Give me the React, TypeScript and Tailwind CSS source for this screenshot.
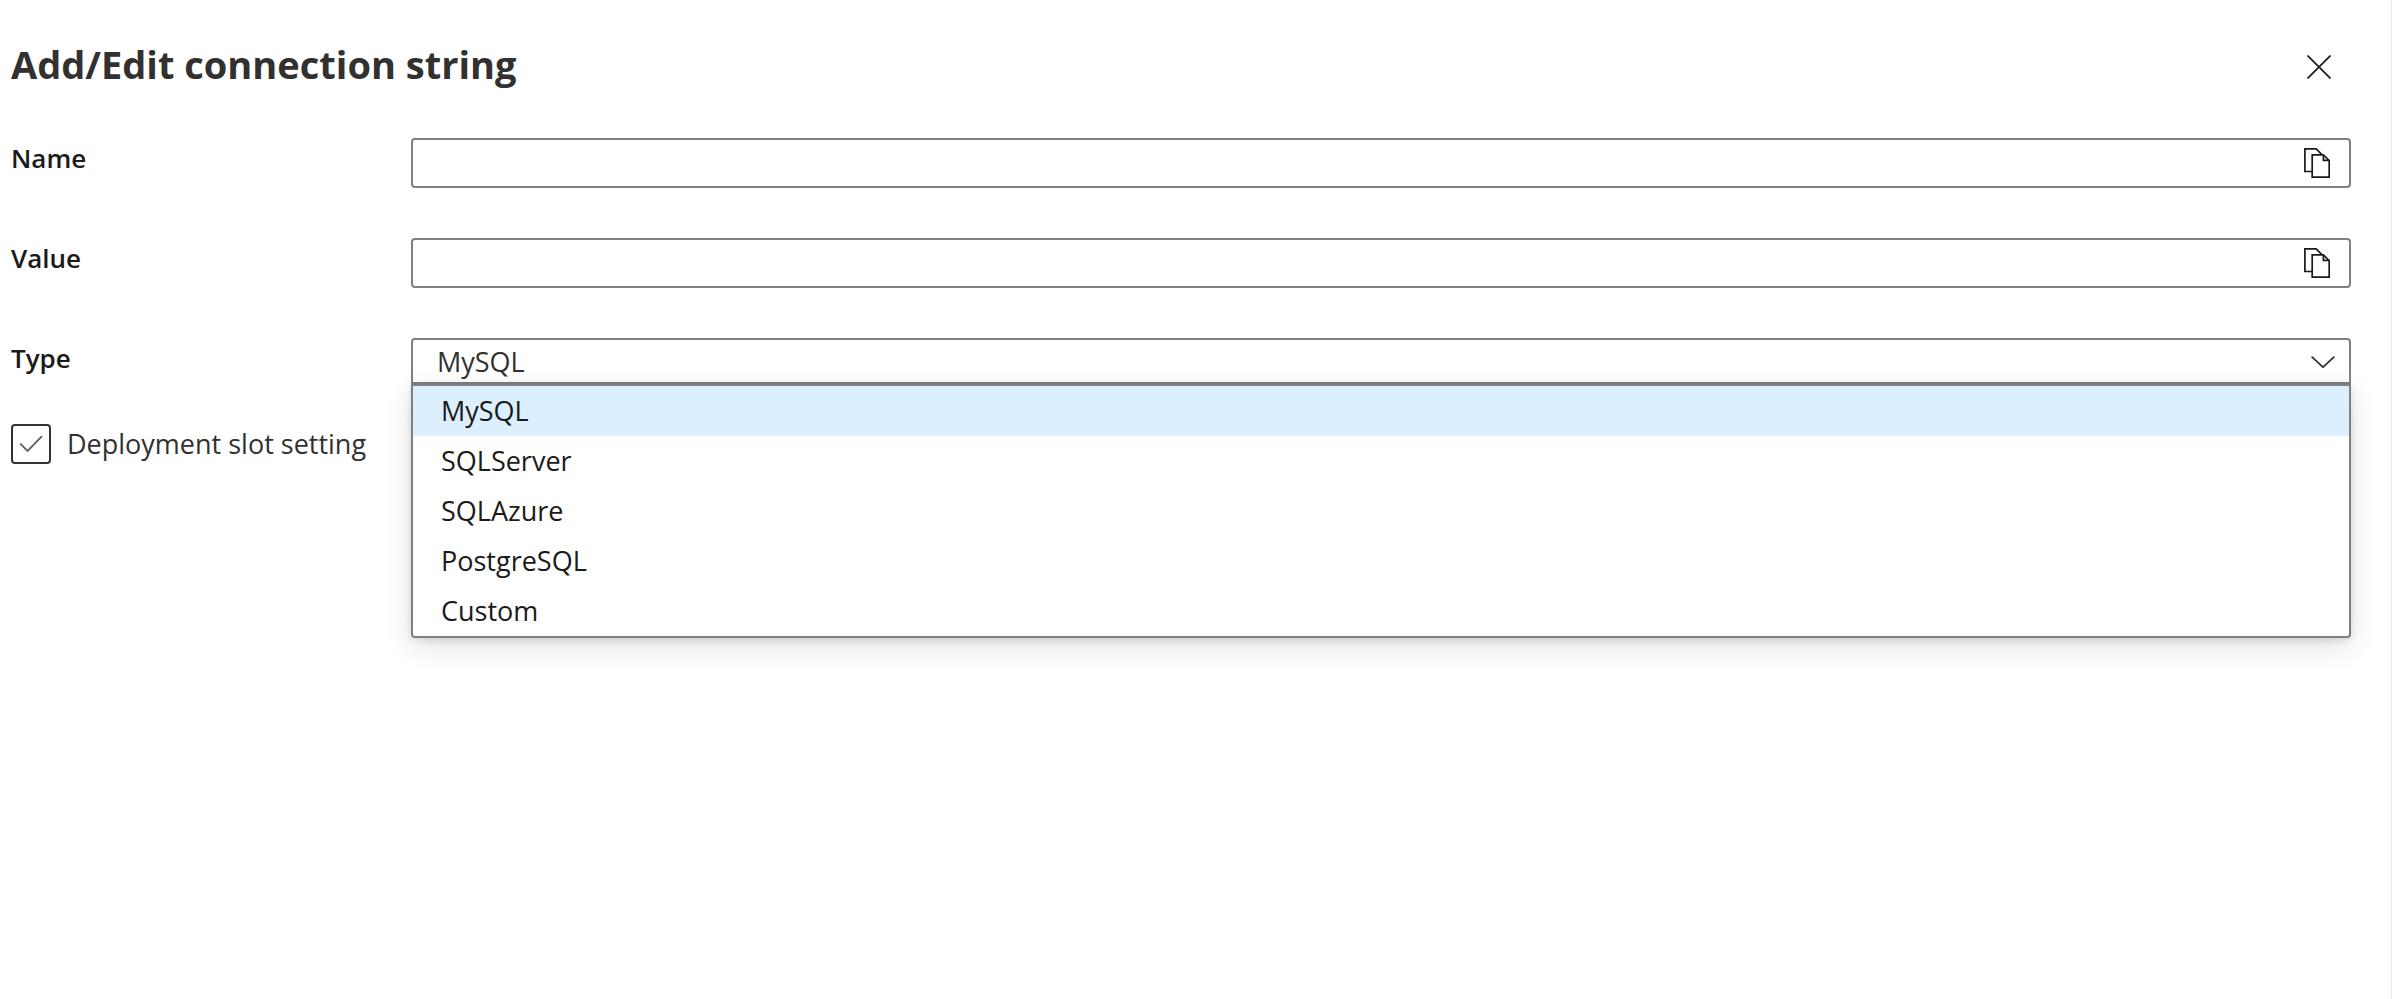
import { useState } from 'react';

const TYPES = ['MySQL', 'SQLServer', 'SQLAzure', 'PostgreSQL', 'Custom'];

function CloseIcon() {
  return (
    <svg width="24" height="24" viewBox="0 0 24 24" fill="none" stroke="#1b1a19" strokeWidth="1.7" aria-hidden="true">
      <path d="M.5 .5 23.5 23.5M23.5 .5 .5 23.5" />
    </svg>
  );
}

function CopyIcon() {
  return (
    <svg width="26" height="30" viewBox="0 0 26 30" fill="none" stroke="#1b1a19" strokeWidth="1.7" aria-hidden="true">
      <path d="M8 23.5H.9V.9H12.2L17.6 6.3" />
      <path d="M8.2 6.9H19.4L25.2 12.7V29.1H8.2Z" />
      <path d="M19.4 6.9V12.4H25.2" />
    </svg>
  );
}

function TextRow({ id, label }: { id: string; label: string }) {
  const [value, setValue] = useState('');
  return (
    <div className="flex items-start">
      <label htmlFor={id} className="w-[400px] shrink-0 text-[26px] leading-10 font-semibold">
        {label}
      </label>
      <div className="flex h-[50px] flex-1 items-center rounded-[4px] border-2 border-[#808080] bg-white pr-[19px]">
        <input
          id={id}
          type="text"
          value={value}
          onChange={(e) => setValue(e.target.value)}
          className="h-full min-w-0 flex-1 bg-transparent px-6 text-[27px] outline-none"
        />
        <button type="button" aria-label={`Copy ${label.toLowerCase()}`}>
          <CopyIcon />
        </button>
      </div>
    </div>
  );
}

function TypeRow() {
  const [type, setType] = useState('MySQL');
  return (
    <div className="flex items-start">
      <label htmlFor="type" className="w-[400px] shrink-0 text-[26px] leading-10 font-semibold">
        Type
      </label>
      <div className="relative flex-1">
        <div className="grid h-[46px] items-center rounded-t-[4px] border-2 border-[#808080] bg-white pt-0.5">
          <select
            id="type"
            value={type}
            onChange={(e) => setType(e.target.value)}
            className="col-start-1 row-start-1 h-10 w-full appearance-none bg-transparent px-6 text-[27px] leading-10 text-[#323130] outline-none"
          >
            {TYPES.map((t) => (
              <option key={t}>{t}</option>
            ))}
          </select>
          <svg
            className="pointer-events-none col-start-1 row-start-1 mr-[14px] justify-self-end"
            width="24"
            height="12"
            viewBox="0 0 24 12"
            fill="none"
            stroke="#323130"
            strokeWidth="1.7"
            aria-hidden="true"
          >
            <path d="M.6 .6 12 11.2 23.4 .6" />
          </svg>
        </div>
        <ul
          role="listbox"
          aria-label="Type"
          className="absolute inset-x-0 top-full rounded-b-[4px] border-2 border-[#808080] bg-white shadow-[0_8px_28px_rgba(0,0,0,0.13),0_2px_7px_rgba(0,0,0,0.11)]"
        >
          {TYPES.map((t) => (
            <li
              key={t}
              role="option"
              aria-selected={t === type}
              onClick={() => setType(t)}
              className="h-[50px] px-7 text-[27px] leading-[50px] aria-selected:bg-[#dceffe]"
            >
              {t}
            </li>
          ))}
        </ul>
      </div>
    </div>
  );
}

export default function App() {
  const [slot, setSlot] = useState(true);
  return (
    <main className="min-h-screen border-r border-[#eaeaea] bg-white pt-9 pr-10 pl-[11px] font-['Open_Sans','Noto_Sans',sans-serif] text-[#1b1a19]">
      <header className="mb-10 flex h-[62px] items-center justify-between pr-5">
        <h1 className="self-start text-[38px] leading-14 font-bold text-[#323130]">Add/Edit connection string</h1>
        <button type="button" aria-label="Close">
          <CloseIcon />
        </button>
      </header>
      <form className="flex flex-col gap-[50px]">
        <TextRow id="name" label="Name" />
        <TextRow id="value" label="Value" />
        <div className="flex flex-col gap-10">
          <TypeRow />
          <label className="flex items-center gap-4 self-start text-[27px] leading-10 text-[#323130]">
            <span className="grid size-10 place-items-center">
              <input
                type="checkbox"
                checked={slot}
                onChange={(e) => setSlot(e.target.checked)}
                className="peer col-start-1 row-start-1 size-10 appearance-none rounded-[4px] border-2 border-[#323130] bg-white"
              />
              <svg
                className="pointer-events-none invisible col-start-1 row-start-1 peer-checked:visible"
                width="24"
                height="18"
                viewBox="0 0 24 18"
                fill="none"
                stroke="#605e5c"
                strokeWidth="1.8"
                aria-hidden="true"
              >
                <path d="M1.2 8.6 8.6 16 23 1.2" />
              </svg>
            </span>
            Deployment slot setting
          </label>
        </div>
      </form>
    </main>
  );
}
